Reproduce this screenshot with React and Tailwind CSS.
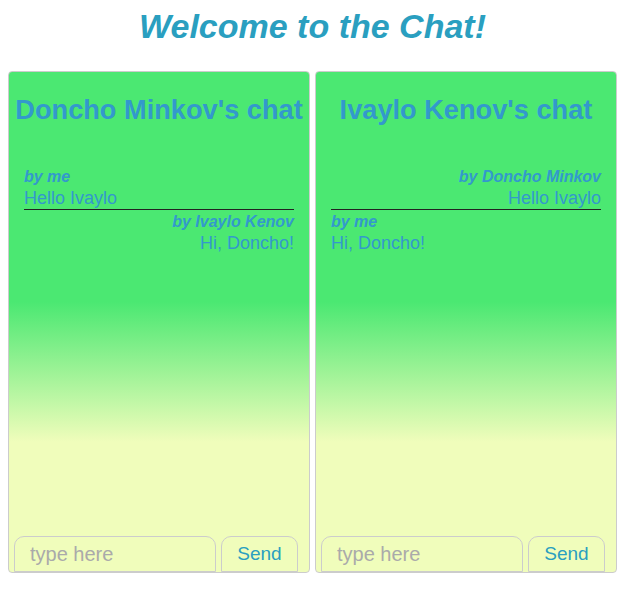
import React from 'react';

const chats = [
  {
    owner: "Doncho Minkov's chat",
    messages: [
      { by: 'by me', text: 'Hello Ivaylo', mine: true },
      { by: 'by Ivaylo Kenov', text: 'Hi, Doncho!', mine: false },
    ],
  },
  {
    owner: "Ivaylo Kenov's chat",
    messages: [
      { by: 'by Doncho Minkov', text: 'Hello Ivaylo', mine: false },
      { by: 'by me', text: 'Hi, Doncho!', mine: true },
    ],
  },
];

const ChatBox = ({ chat }) => {
  return (
    <div className="w-[302px] h-[502px] flex flex-col border border-[#cccccc] rounded-[4px] bg-[linear-gradient(to_bottom,#4be872_0%,#4be872_46%,#f0fdbb_74%,#f0fdbb_100%)] overflow-hidden">
      <h2 className="mt-[22px] text-center text-[27.2px] leading-[31px] font-bold text-[#3399cc] whitespace-nowrap">
        {chat.owner}
      </h2>
      <div className="flex-1 mt-[40px] px-[15px]">
        {chat.messages.map((m, i) => (
          <div
            key={i}
            className={`pt-[2px] ${i === 0 ? 'border-b border-[#222222]' : ''} ${m.mine ? 'text-left' : 'text-right'}`}
          >
            <div className="text-[16px] leading-[20px] font-bold italic text-[#3399cc]">{m.by}</div>
            <div className="text-[18px] leading-[22px] text-[#3399cc]">{m.text}</div>
          </div>
        ))}
      </div>
      {/* send row */}
      <div className="flex items-end gap-[5px] px-[5px]">
        <input
          type="text"
          placeholder="type here"
          className="w-[202px] h-[36px] px-[15px] bg-transparent border border-[#cccccc] rounded-t-[10px] text-[20px] text-[#333] placeholder:text-[#aaaaaa] outline-none"
        />
        <button className="w-[77px] h-[36px] bg-transparent border border-[#cccccc] rounded-t-[10px] text-[19px] text-[#2a9fc0]">
          Send
        </button>
      </div>
    </div>
  );
};

export default function App() {
  return (
    <div className="w-[625px] h-[600px] bg-white font-['Liberation_Sans',Arial,sans-serif]">
      <h1 className="pt-[6px] h-[71px] text-center text-[34px] leading-[40px] font-bold italic text-[#2a9fc0]">
        Welcome to the Chat!
      </h1>
      <div className="flex gap-[5px] pl-[8px]">
        {chats.map((c, i) => (
          <ChatBox key={i} chat={c} />
        ))}
      </div>
    </div>
  );
}
